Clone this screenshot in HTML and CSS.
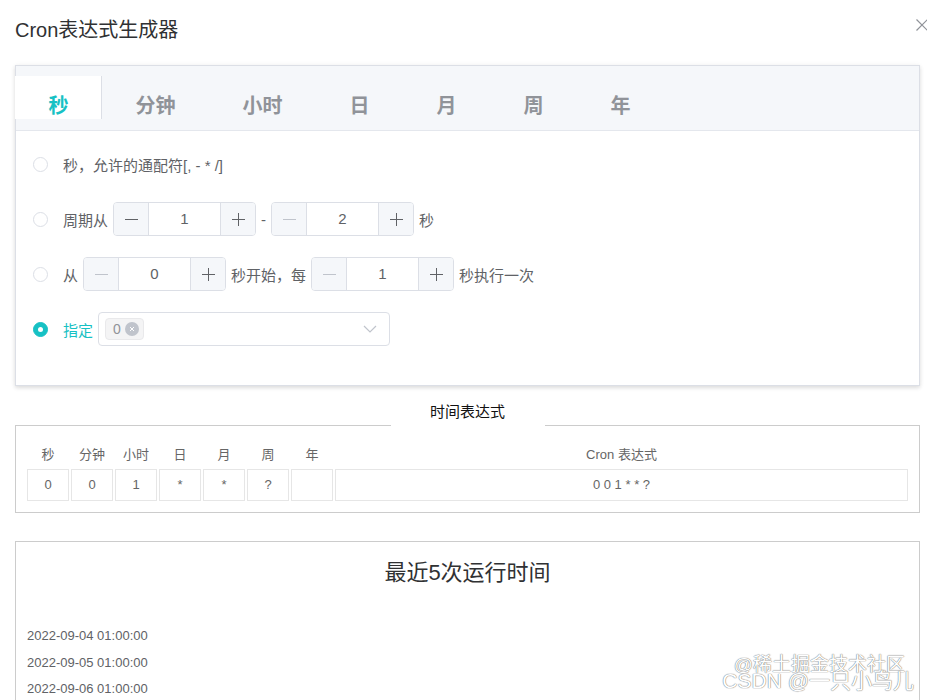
FILE: index.html
```html
<!DOCTYPE html>
<html lang="zh-CN">
<head>
<meta charset="utf-8">
<title>Cron表达式生成器</title>
<link rel="stylesheet" href="styles.css">
</head>
<body>
<div class="dialog">
  <div class="dialog-header">
    <span class="dialog-title">Cron表达式生成器</span>
    <button class="close-btn" aria-label="关闭">
      <svg width="12" height="12" viewBox="0 0 12 12"><path d="M0.5 0.5 L11.5 11.5 M11.5 0.5 L0.5 11.5" stroke="#909399" stroke-width="1.2" fill="none"/></svg>
    </button>
  </div>
  <div class="dialog-body">
    <div class="tabs-card">
      <div class="tabs-header">
        <div class="tab-item first active">秒</div>
        <div class="tab-item">分钟</div>
        <div class="tab-item">小时</div>
        <div class="tab-item">日</div>
        <div class="tab-item">月</div>
        <div class="tab-item">周</div>
        <div class="tab-item">年</div>
      </div>
      <div class="tabs-content">
        <div class="opt-row">
          <span class="radio"></span>
          <span class="label">秒，允许的通配符[, - * /]</span>
        </div>
        <div class="opt-row">
          <span class="radio"></span>
          <span class="label">周期从</span>
          <div class="num-input">
            <span class="num-btn minus"><svg width="13" height="13" viewBox="0 0 13 13"><path d="M0 6.5 H13" stroke="currentColor" stroke-width="1"/></svg></span>
            <span class="num-value">1</span>
            <span class="num-btn plus"><svg width="13" height="13" viewBox="0 0 13 13"><path d="M0 6.5 H13 M6.5 0 V13" stroke="currentColor" stroke-width="1"/></svg></span>
          </div>
          <span class="label">-</span>
          <div class="num-input">
            <span class="num-btn minus disabled"><svg width="13" height="13" viewBox="0 0 13 13"><path d="M0 6.5 H13" stroke="currentColor" stroke-width="1"/></svg></span>
            <span class="num-value">2</span>
            <span class="num-btn plus"><svg width="13" height="13" viewBox="0 0 13 13"><path d="M0 6.5 H13 M6.5 0 V13" stroke="currentColor" stroke-width="1"/></svg></span>
          </div>
          <span class="label">秒</span>
        </div>
        <div class="opt-row">
          <span class="radio"></span>
          <span class="label">从</span>
          <div class="num-input">
            <span class="num-btn minus disabled"><svg width="13" height="13" viewBox="0 0 13 13"><path d="M0 6.5 H13" stroke="currentColor" stroke-width="1"/></svg></span>
            <span class="num-value">0</span>
            <span class="num-btn plus"><svg width="13" height="13" viewBox="0 0 13 13"><path d="M0 6.5 H13 M6.5 0 V13" stroke="currentColor" stroke-width="1"/></svg></span>
          </div>
          <span class="label">秒开始，每</span>
          <div class="num-input">
            <span class="num-btn minus disabled"><svg width="13" height="13" viewBox="0 0 13 13"><path d="M0 6.5 H13" stroke="currentColor" stroke-width="1"/></svg></span>
            <span class="num-value">1</span>
            <span class="num-btn plus"><svg width="13" height="13" viewBox="0 0 13 13"><path d="M0 6.5 H13 M6.5 0 V13" stroke="currentColor" stroke-width="1"/></svg></span>
          </div>
          <span class="label">秒执行一次</span>
        </div>
        <div class="opt-row">
          <span class="radio checked"></span>
          <span class="label active">指定</span>
          <div class="select">
            <span class="tag">0<span class="tag-close"><svg width="8" height="8" viewBox="0 0 8 8"><path d="M2 2 L6 6 M6 2 L2 6" stroke="#fff" stroke-width="1" fill="none"/></svg></span></span>
            <svg class="select-arrow" width="14" height="8" viewBox="0 0 14 8"><path d="M1 1 L7 7 L13 1" stroke="#c0c4cc" stroke-width="1.2" fill="none"/></svg>
          </div>
        </div>
      </div>
    </div>

    <div class="legend-row">
      <span class="legend-line"></span>
      <span class="legend-text">时间表达式</span>
      <span class="legend-line"></span>
    </div>
    <div class="expr-box">
      <div class="expr-grid">
        <div class="eh">秒</div>
        <div class="eh">分钟</div>
        <div class="eh">小时</div>
        <div class="eh">日</div>
        <div class="eh">月</div>
        <div class="eh">周</div>
        <div class="eh">年</div>
        <div class="eh">Cron 表达式</div>
        <div class="ev">0</div>
        <div class="ev">0</div>
        <div class="ev">1</div>
        <div class="ev">*</div>
        <div class="ev">*</div>
        <div class="ev">?</div>
        <div class="ev"></div>
        <div class="ev">0 0 1 * * ?</div>
      </div>
    </div>

    <div class="result-box">
      <div class="result-title">最近5次运行时间</div>
      <ul class="result-list">
        <li>2022-09-04 01:00:00</li>
        <li>2022-09-05 01:00:00</li>
        <li>2022-09-06 01:00:00</li>
      </ul>
    </div>
  </div>
</div>
<div class="watermark">
  <div class="wm1">@稀土掘金技术社区</div>
  <div class="wm2">CSDN @一只小鸟儿</div>
</div>
</body>
</html>
```
FILE: styles.css
```css
* { box-sizing: border-box; }
html, body {
  margin: 0;
  padding: 0;
  background: #fff;
  overflow: hidden;
  height: 700px;
}
body {
  font-family: "Liberation Sans", "Noto Sans CJK SC", sans-serif;
  color: #606266;
  position: relative;
}
.dialog {
  padding: 0 7px 0 15px;
}
.dialog-header {
  display: flex;
  justify-content: space-between;
  align-items: center;
  padding-top: 15px;
  height: 45px;
}
.dialog-title {
  font-size: 20px;
  line-height: 30px;
  color: #303133;
}
.close-btn {
  border: 0;
  background: none;
  padding: 0;
  margin-right: -8px;
  margin-top: -11px;
  width: 12px;
  height: 12px;
  display: flex;
}
.dialog-body {
  padding-top: 20px;
}

/* tabs card */
.tabs-card {
  border: 1px solid #dcdfe6;
  background: #fff;
  box-shadow: 0 2px 4px 0 rgba(0,0,0,.12), 0 0 6px 0 rgba(0,0,0,.04);
}
.tabs-header {
  display: flex;
  align-items: flex-start;
  background: #f5f7fa;
  border-bottom: 1px solid #e4e7ed;
  height: 65px;
  padding-top: 10px;
}
.tab-item {
  height: 43px;
  padding: 20px 32.5px 0;
  border-left: 1px solid transparent;
  border-right: 1px solid transparent;
  font-size: 20px;
  line-height: 20px;
  font-weight: bold;
  color: #909399;
}
.tab-item.first { margin-left: -1px; }
.tab-item.active {
  background: #fff;
  color: #17c1c4;
  border-right-color: #dcdfe6;
}
.tabs-content {
  padding: 16px 17px 39px;
}
.opt-row {
  display: flex;
  align-items: center;
  height: 34px;
  margin-bottom: 21px;
  font-size: 15px;
}
.opt-row:last-child { margin-bottom: 0; }
.radio {
  width: 15px;
  height: 15px;
  border: 1px solid #dcdfe6;
  border-radius: 50%;
  background: #fff;
  margin-right: 15px;
  flex: none;
  display: flex;
  align-items: center;
  justify-content: center;
}
.radio.checked {
  background: #17c1c4;
  border-color: #17c1c4;
}
.radio.checked::after {
  content: "";
  width: 5px;
  height: 5px;
  border-radius: 50%;
  background: #fff;
}
.label {
  color: #606266;
  white-space: nowrap;
}
.label.active { color: #17c1c4; }

.num-input {
  display: flex;
  width: 143px;
  height: 34px;
  margin: 0 5px;
  border: 1px solid #dcdfe6;
  border-radius: 4px;
  overflow: hidden;
  flex: none;
}
.num-btn {
  width: 35px;
  flex: none;
  background: #f5f7fa;
  color: #606266;
  display: flex;
  align-items: center;
  justify-content: center;
}
.num-btn.minus {
  border-right: 1px solid #dcdfe6;
}
.num-btn.minus.disabled { color: #c0c4cc; }
.num-btn.plus {
  border-left: 1px solid #dcdfe6;
}
.num-value {
  flex: 1;
  text-align: center;
  line-height: 32px;
  font-size: 15px;
  color: #606266;
}
.select {
  width: 292px;
  height: 34px;
  margin-left: 5px;
  border: 1px solid #dcdfe6;
  border-radius: 4px;
  display: flex;
  align-items: center;
  padding: 0 12px 0 6px;
  justify-content: space-between;
}
.tag {
  display: flex;
  align-items: center;
  height: 22px;
  padding: 0 4px 0 7px;
  background: #f4f4f5;
  border: 1px solid #e9e9eb;
  border-radius: 4px;
  font-size: 14px;
  color: #909399;
}
.tag-close {
  width: 14px;
  height: 14px;
  border-radius: 50%;
  background: #c0c4cc;
  margin-left: 4px;
  display: flex;
  align-items: center;
  justify-content: center;
}

/* expression */
.legend-row {
  display: flex;
  margin-top: 16px;
  height: 24px;
}
.legend-line {
  flex: 1;
  border-bottom: 1px solid #ccc;
}
.legend-text {
  width: 154px;
  text-align: center;
  font-size: 15px;
  line-height: 20px;
  color: #111;
}
.expr-box {
  border: 1px solid #ccc;
  border-top: 0;
  padding: 15px 11px 11px;
}
.expr-grid {
  display: grid;
  grid-template-columns: repeat(7, 42px) 1fr;
  column-gap: 2px;
  font-size: 13px;
}
.eh {
  height: 28px;
  line-height: 28px;
  text-align: center;
  color: #666;
}
.ev {
  height: 32px;
  line-height: 30px;
  text-align: center;
  border: 1px solid #e6e6e6;
  color: #666;
}

/* results */
.result-box {
  margin-top: 28px;
  border: 1px solid #ccc;
  height: 300px;
  padding: 20px 11px;
}
.result-title {
  text-align: center;
  font-size: 22px;
  line-height: 22px;
  color: #303133;
}
.result-list {
  list-style: none;
  margin: 39px 0 0;
  padding: 0;
  font-size: 13px;
  line-height: 26.5px;
  color: #606266;
}

.watermark {
  position: absolute;
  right: 14px;
  top: 654px;
  text-align: right;
  color: #fff;
  text-shadow: 0 0 1px #777, 0 0 1px #777;
  pointer-events: none;
}
.wm1 {
  font-size: 19px;
  line-height: 22px;
  margin-right: 8px;
}
.wm2 {
  font-size: 21px;
  line-height: 22px;
  margin-top: -6px;
  margin-right: -1px;
}
```
